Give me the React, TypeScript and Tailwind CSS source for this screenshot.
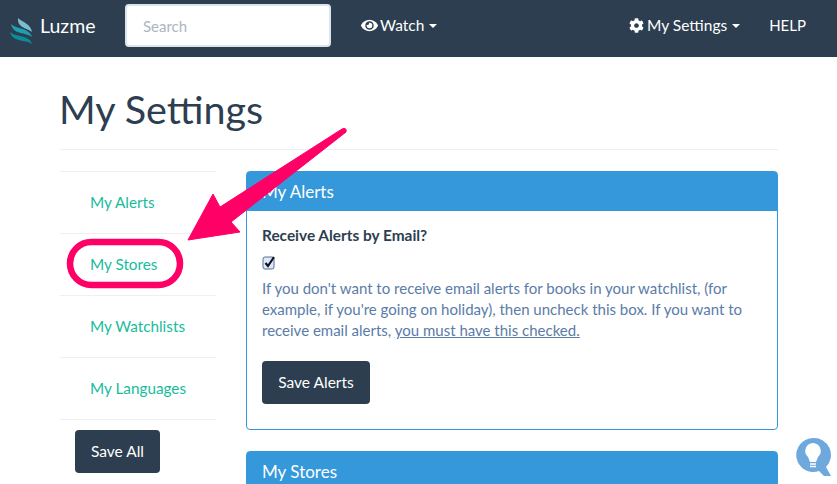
import React from 'react'
import { FaCog, FaEye } from 'react-icons/fa'

const sideLinks = ['My Alerts', 'My Stores', 'My Watchlists', 'My Languages']

const Caret = () => (
  <span className="ml-[5px] inline-block h-0 w-0 border-x-[4px] border-t-[4px] border-x-transparent border-t-white" />
)

const Logo = () => (
  <svg width="24" height="27" viewBox="0 0 24 27" className="mt-[11px] shrink-0">
    <path d="M8 0 C12 4 21 6 22 14 C17 10 7 10 8 0 Z" fill="#7dbbd0" />
    <path d="M1 6 C6 11 20 10 22 19 C16 14 3 17 1 6 Z" fill="#1da0b0" />
    <path d="M0 14 C5 19 20 17 22 26 C15 21 3 25 0 14 Z" fill="#0b8c9b" />
  </svg>
)

const App: React.FC = () => {
  return (
    <div className="relative h-[484px] w-[837px] overflow-hidden bg-white font-['Lato',sans-serif] text-[15px] text-[#2c3e50]">
      {/* Navbar */}
      <nav className="flex h-[57px] items-center bg-[#2c3e50] pb-[6px] text-[15.5px] text-white">
        <div className="ml-[10px] flex w-[115px] items-center gap-[6px]">
          <Logo />
          <span className="text-[19.5px] leading-none">Luzme</span>
        </div>
        <input
          readOnly
          placeholder="Search"
          className="h-[43px] w-[206px] rounded-[4px] border-2 border-[#dce4ec] bg-white px-[16px] text-[15px] outline-none placeholder:text-[#acb6c0]"
        />
        <div className="ml-[30px] flex items-center">
          <FaEye size={17} className="mr-[2px]" />
          <span>Watch</span>
          <Caret />
        </div>
        <div className="ml-auto flex items-center">
          <FaCog size={15} className="mr-[3px]" />
          <span>My Settings</span>
          <Caret />
        </div>
        <span className="mr-[31px] ml-[29px] text-[15px]">HELP</span>
      </nav>

      {/* Page */}
      <div className="ml-[60px] w-[718px]">
        <h1 className="mt-[28px] border-b border-[#ecf0f1] pb-[17px] text-[39.5px] leading-[47px] font-normal">
          <span className="-ml-[1px]">My Settings</span>
        </h1>
        <div className="mt-[21px] flex gap-[30px]">
          <aside className="w-[156px] shrink-0">
            <ul className="border-t border-[#ecf0f1]">
              {sideLinks.map((link) => (
                <li
                  key={link}
                  className="flex h-[62px] items-center border-b border-[#ecf0f1] pl-[30px] text-[15.3px] text-[#18bc9c]"
                >
                  {link}
                </li>
              ))}
            </ul>
            <button className="mt-[10px] ml-[15px] h-[43px] w-[85px] rounded-[4px] bg-[#2c3e50] text-[15.5px] text-white">
              Save All
            </button>
          </aside>

          <main className="flex-1">
            <section className="rounded-[4px] border border-[#3498db]">
              <h2 className="flex h-[39px] items-center bg-[#3498db] px-[15px] text-[17px] font-normal text-white">
                My Alerts
              </h2>
              <div className="px-[15px] pt-[14px] pb-[25px]">
                <p className="text-[15.4px] leading-[20px] font-bold">Receive Alerts by Email?</p>
                <svg width="14" height="15" viewBox="0 0 14 15" className="mt-[10px] block">
                  <rect x="1" y="2" width="11" height="12" rx="2" fill="#dfe8fb" stroke="#5a6f95" />
                  <path d="M3.5 8 L6 11 L12 2" fill="none" stroke="#0b1220" strokeWidth="2.2" />
                </svg>
                <p className="mt-[8px] text-[15px] leading-[21px] text-[#5a7ca8]">
                  If you don't want to receive email alerts for books in your watchlist, (for example, if you're going
                  on holiday), then uncheck this box. If you want to receive email alerts,{' '}
                  <span className="underline">you must have this checked.</span>
                </p>
                <button className="mt-[20px] block h-[43px] w-[108px] rounded-[4px] bg-[#2c3e50] text-[15.5px] text-white">
                  Save Alerts
                </button>
              </div>
            </section>
            <section className="mt-[21px] rounded-[4px] border border-[#3498db]">
              <h2 className="flex h-[39px] items-center bg-[#3498db] px-[15px] text-[17px] font-normal text-white">
                My Stores
              </h2>
            </section>
          </main>
        </div>
      </div>

      {/* Annotation over the page */}
      <svg width="837" height="484" className="pointer-events-none absolute top-0 left-0">
        <path
          d="M188 240 L213 194 L220 207 L342 129 Q347 127 346 132 L231 222 L240 232 Z"
          fill="#ff0066"
          stroke="#ff0066"
          strokeWidth="1"
          strokeLinejoin="round"
        />
        <rect x="70" y="242" width="110" height="43" rx="21.5" fill="none" stroke="#ff0066" strokeWidth="6.5" />
      </svg>

      {/* Help bubble */}
      <svg width="40" height="44" viewBox="0 0 40 44" className="absolute top-[437px] left-[795px]">
        <path d="M18 1 A17 17 0 1 0 24 34 L29 39 L36 39 L31 30 A17 17 0 0 0 18 1 Z" fill="#6fa8dc" />
        <path d="M18 6 A8 8 0 0 0 13 20 L15 25 L21 25 L23 20 A8 8 0 0 0 18 6 Z" fill="white" />
        <path d="M15 27 H21 M15 29.5 H21" stroke="white" strokeWidth="1.4" />
      </svg>
    </div>
  )
}

export default App
